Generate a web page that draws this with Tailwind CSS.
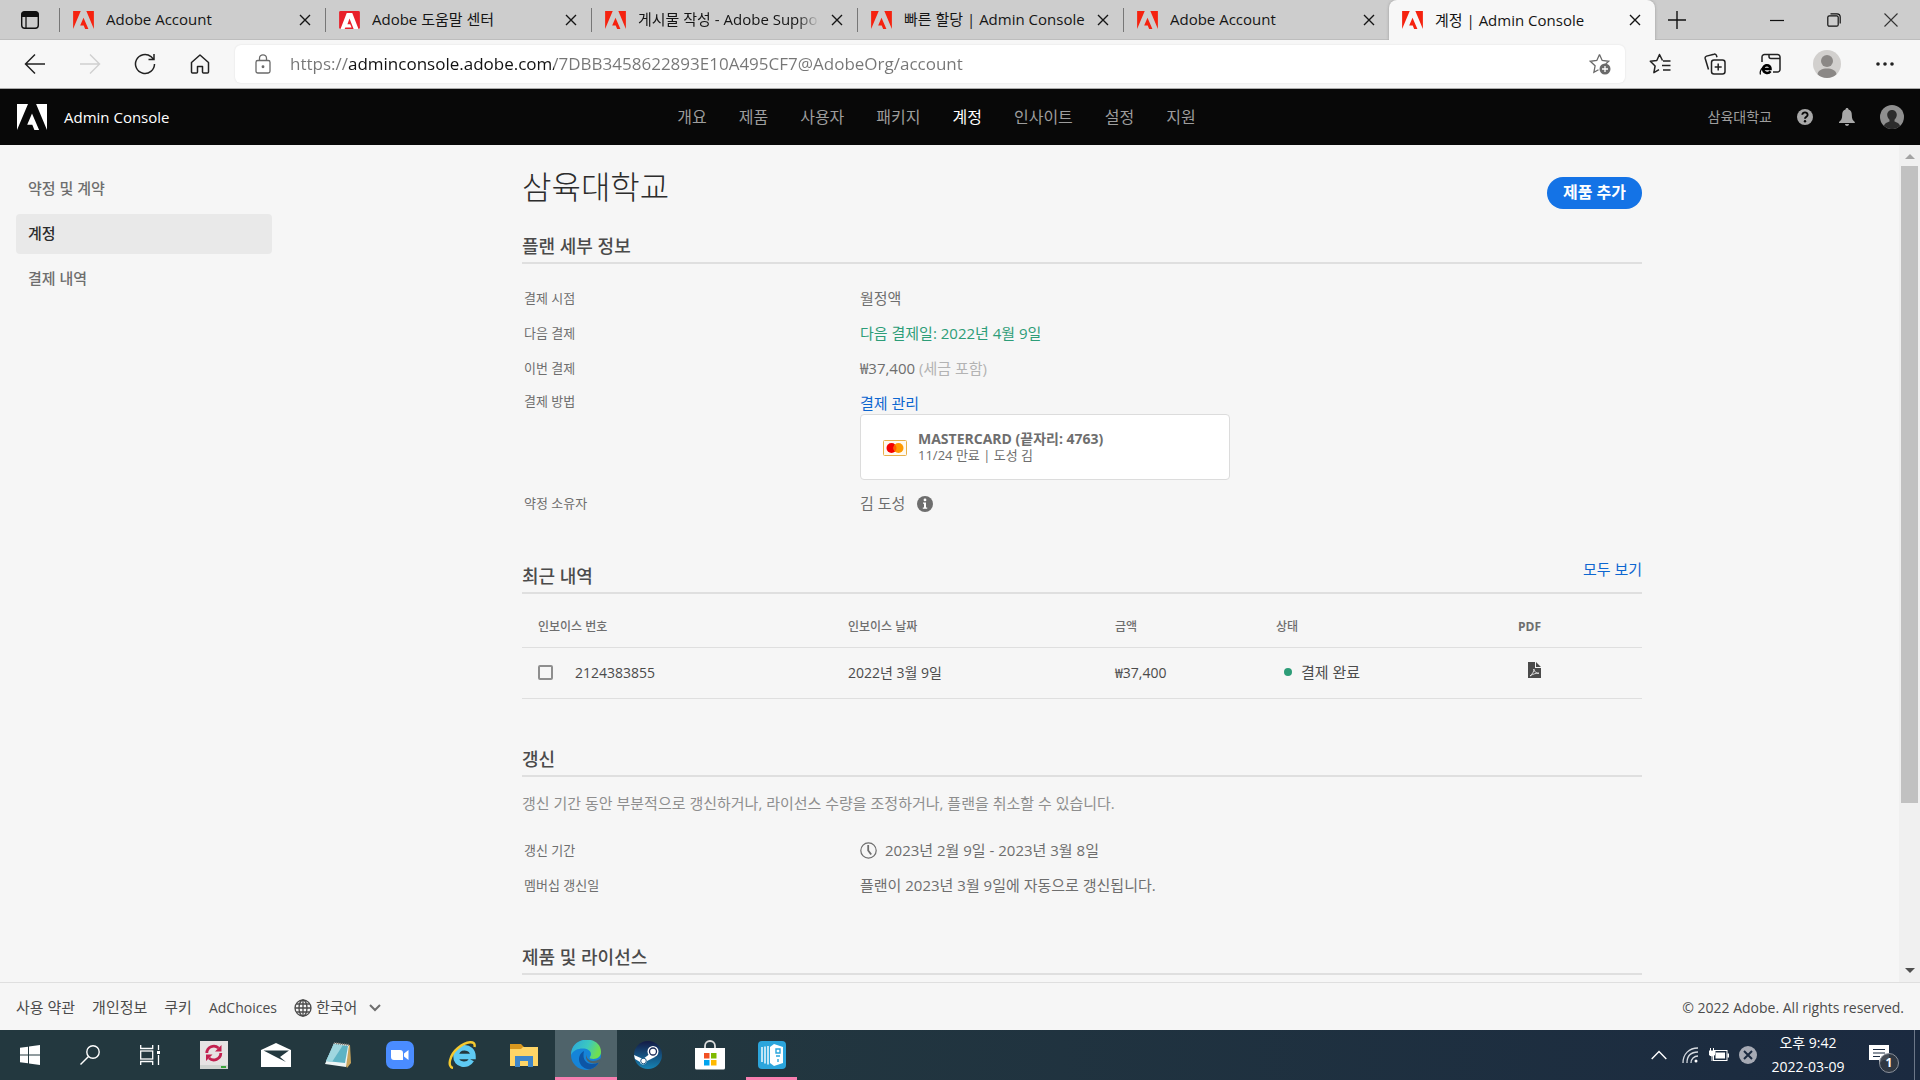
<!DOCTYPE html>
<html lang="ko">
<head>
    <meta charset="UTF-8">
    <meta name="viewport" content="width=device-width, initial-scale=1.0">
    <title>계정 | Admin Console</title>
    <script src="https://cdn.jsdelivr.net/npm/@tailwindcss/browser@4"></script>
</head>
<body class="h-screen flex flex-col overflow-hidden bg-[#f6f6f6] text-[#6e6e6e] text-[15px] font-['Open_Sans','Noto_Sans_CJK_KR',sans-serif]">
    <svg class="hidden">
        <symbol id="adobe" viewBox="0 0 30 26"><path d="M19.1 0H30v26zM11 0H0v26zM15 9.6 22.1 26h-4.7l-2.1-5.2h-5.1z"/></symbol>
        <symbol id="close" viewBox="0 0 12 12"><path d="m1 1 10 10M11 1 1 11" fill="none" stroke="currentColor" stroke-width="1.4"/></symbol>
    </svg>

    <!-- Tab strip -->
    <div class="h-10 shrink-0 flex bg-[#cdcdcd] text-[#151515] text-[15px] border-b border-[#bdbdbd]">
        <button aria-label="Tab actions" class="w-[59px] flex items-center justify-center">
            <svg class="w-5 h-5" viewBox="0 0 20 20"><rect x="1.7" y="1.7" width="16.6" height="16.6" rx="3" fill="none" stroke="#111" stroke-width="1.4"/><path d="M1.5 7V4.500a3 3 0 0 1 3-3h11a3 3 0 0 1 3 3V7z" fill="#111"/><path d="M6 7v11" stroke="#111" stroke-width="1.3"/></svg>
        </button>
        <div class="w-px h-6 my-2 bg-[#777]"></div>
        <div class="w-[265px] flex items-center pl-[13px] pr-3.5">
            <svg class="w-[21px] h-[18px] fill-[#f5220f]"><use href="#adobe"/></svg>
            <a href="#" class="flex-1 ml-3 whitespace-nowrap overflow-hidden">Adobe Account</a>
            <button aria-label="Close tab"><svg class="w-3 h-3"><use href="#close"/></svg></button>
        </div>
        <div class="w-px h-6 my-2 bg-[#777]"></div>
        <div class="w-[265px] flex items-center pl-[13px] pr-3.5">
            <svg class="w-[21px] h-[18px]" viewBox="0 0 30 26"><rect width="30" height="26" rx="2" fill="#e8202a"/><path d="M11 3h8l9 23h-7l-6-15-3 8h4l2 5H9l-1 2H2z" fill="#fff"/></svg>
            <a href="#" class="flex-1 ml-3 whitespace-nowrap overflow-hidden">Adobe 도움말 센터</a>
            <button aria-label="Close tab"><svg class="w-3 h-3"><use href="#close"/></svg></button>
        </div>
        <div class="w-px h-6 my-2 bg-[#777]"></div>
        <div class="w-[265px] flex items-center pl-[13px] pr-3.5">
            <svg class="w-[21px] h-[18px] shrink-0 fill-[#f5220f]"><use href="#adobe"/></svg>
            <a href="#" class="flex-1 ml-3 mr-3 whitespace-nowrap overflow-hidden [mask-image:linear-gradient(to_right,#000_88%,transparent)]">게시물 작성 - Adobe Support</a>
            <button aria-label="Close tab"><svg class="w-3 h-3"><use href="#close"/></svg></button>
        </div>
        <div class="w-px h-6 my-2 bg-[#777]"></div>
        <div class="w-[265px] flex items-center pl-[13px] pr-3.5">
            <svg class="w-[21px] h-[18px] fill-[#f5220f]"><use href="#adobe"/></svg>
            <a href="#" class="flex-1 ml-3 whitespace-nowrap overflow-hidden">빠른 할당 | Admin Console</a>
            <button aria-label="Close tab"><svg class="w-3 h-3"><use href="#close"/></svg></button>
        </div>
        <div class="w-px h-6 my-2 bg-[#777]"></div>
        <div class="w-[265px] flex items-center pl-[13px] pr-3.5">
            <svg class="w-[21px] h-[18px] fill-[#f5220f]"><use href="#adobe"/></svg>
            <a href="#" class="flex-1 ml-3 whitespace-nowrap overflow-hidden">Adobe Account</a>
            <button aria-label="Close tab"><svg class="w-3 h-3"><use href="#close"/></svg></button>
        </div>
        <div class="w-[266px] h-10 flex items-center pl-[13px] pr-3.5 bg-[#f7f7f7] rounded-t-lg shadow-[0_0_3px_#999] [clip-path:inset(-4px_-4px_0px_-4px)]">
            <svg class="w-[21px] h-[18px] fill-[#f5220f]"><use href="#adobe"/></svg>
            <a href="#" class="flex-1 ml-3 whitespace-nowrap overflow-hidden">계정 | Admin Console</a>
            <button aria-label="Close tab"><svg class="w-3 h-3"><use href="#close"/></svg></button>
        </div>
        <button aria-label="New tab" class="w-11 flex items-center justify-center">
            <svg class="w-[18px] h-[18px]" viewBox="0 0 18 18"><path d="M9 0v18M0 9h18" stroke="#111" stroke-width="1.4"/></svg>
        </button>
        <div class="ml-auto flex pr-px">
            <button aria-label="Minimize" class="w-[57px] flex items-center justify-center"><svg class="w-3.5 h-3.5" viewBox="0 0 14 14"><path d="M0 7.500h14" stroke="#111" stroke-width="1.2"/></svg></button>
            <button aria-label="Restore" class="w-[57px] flex items-center justify-center"><svg class="w-3.5 h-3.5" viewBox="0 0 14 14" fill="none" stroke="#111" stroke-width="1.200"><rect x=".8" y="2.800" width="10.400" height="10.400" rx="1.500"/><path d="M3.500.8H10A3.200 3.200 0 0 1 13.200 4v6.500"/></svg></button>
            <button aria-label="Close window" class="w-[57px] flex items-center justify-center"><svg class="w-3.5 h-3.5" viewBox="0 0 14 14"><path d="m.5.5 13 13m0-13-13 13" stroke="#333" stroke-width="1.100"/></svg></button>
        </div>
    </div>

    <!-- Address bar -->
    <div class="h-[49px] shrink-0 flex items-center bg-[#f7f7f7] border-b border-[#aaa]">
        <div class="w-[235px] pl-[7px] flex">
            <button aria-label="Back" class="w-[55px] flex justify-center"><svg class="w-[22px] h-[22px]" viewBox="0 0 22 22" fill="none" stroke="#222" stroke-width="1.500"><path d="M21 11H1.500M11 1.500 1.500 11l9.500 9.500"/></svg></button>
            <button aria-label="Forward" class="w-[55px] flex justify-center"><svg class="w-[22px] h-[22px]" viewBox="0 0 22 22" fill="none" stroke="#d0d0d0" stroke-width="1.500"><path d="M1 11h19.500M11 1.500l9.500 9.500-9.500 9.500"/></svg></button>
            <button aria-label="Refresh" class="w-[55px] flex justify-center"><svg class="w-[22px] h-[22px]" viewBox="0 0 22 22" fill="none" stroke="#222" stroke-width="1.500"><path d="M20.500 11A9.500 9.500 0 1 1 17 3.600l2.500 2.600M20 1v5.500h-5.500"/></svg></button>
            <button aria-label="Home" class="w-[55px] flex justify-center"><svg class="w-5 h-[22px]" viewBox="0 0 20 22" fill="none" stroke="#222" stroke-width="1.500" stroke-linejoin="round"><path d="M1.500 9.500 10 2l8.500 7.500V19a1 1 0 0 1-1 1h-4a1 1 0 0 1-1-1v-5.500h-5V19a1 1 0 0 1-1 1h-4a1 1 0 0 1-1-1z"/></svg></button>
        </div>
        <div class="flex-1 h-[38px] flex items-center gap-[19px] pl-5 pr-3.5 bg-white rounded-md shadow-[0_0_2px_#ddd]">
            <svg class="w-4 h-5 shrink-0" viewBox="0 0 16 20" fill="none" stroke="#6a6a6a" stroke-width="1.300"><rect x="1" y="6.500" width="14" height="12.500" rx="1.800"/><path d="M4.500 6.500V4.300a3.500 3.500 0 0 1 7 0v2.200"/><circle cx="8" cy="12.700" r=".8" fill="#6a6a6a"/></svg>
            <input aria-label="Address" type="text" value="https://adminconsole.adobe.com/7DBB3458622893E10A495CF7@AdobeOrg/account" class="flex-1 min-w-0 h-8 pb-0.5 outline-none text-[17px] bg-[linear-gradient(to_right,#767676_58px,#111111_58px,#111111_264px,#767676_264px)] bg-clip-text text-transparent">
            <button aria-label="Add to favorites"><svg class="w-[22px] h-[22px]" viewBox="0 0 22 22"><path d="m10.500 1.500 2.700 6 6.500.8-3 2.800M10.500 1.500l-2.700 6-6.500.8 4.800 4.500-1.200 6.500 4.600-2.500" fill="none" stroke="#6a6a6a" stroke-width="1.300"/><circle cx="16" cy="16" r="5.500" fill="#6a6a6a"/><path d="M16 13v6M13 16h6" stroke="#fff" stroke-width="1.300"/></svg></button>
        </div>
        <div class="w-[295px] pl-[7px] flex items-center">
            <button aria-label="Favorites" class="w-[55px] flex justify-center"><svg class="w-[22px] h-[22px]" viewBox="0 0 22 22" fill="none" stroke="#222" stroke-width="1.500" stroke-linejoin="round"><path d="M13.500 7.500 10.500 1.500l-2.700 6-6.500.8 4.800 4.700-1.200 6.700 5.100-3M14 8h7.500M13 12.500h8.500M14 17h7.500"/></svg></button>
            <button aria-label="Collections" class="w-[55px] flex justify-center"><svg class="w-[22px] h-[22px]" viewBox="0 0 22 22" fill="none" stroke="#222" stroke-width="1.500"><rect x="7.500" y="7" width="13.500" height="14" rx="2.500"/><path d="M14.200 10.500v7M10.700 14h7M4.500 16.500 1.200 5.500a2 2 0 0 1 1.300-2.400L10 1.200a2 2 0 0 1 2.500 1.400l.5 1.700"/></svg></button>
            <button aria-label="Internet Explorer mode" class="w-[55px] flex justify-center"><svg class="w-[22px] h-[22px]" viewBox="0 0 22 22" fill="none" stroke="#222" stroke-width="1.500"><path d="M3 9V4a2.500 2.500 0 0 1 2.500-2.500h13A2.500 2.500 0 0 1 21 4v12.500a2.500 2.500 0 0 1-2.500 2.500H14M10 1.500v2A2 2 0 0 0 12 5.500h9"/><path d="M11.500 18.200c-2.200 3-7.300 2-7.300-2.200 0-5 7.600-5 7.300 0H4.200" stroke="#000" stroke-width="2.600"/><path d="M1.500 21.500c-1.200-3 1.500-8 6.500-10" stroke="#000" stroke-width="1.200"/></svg></button>
            <button aria-label="Profile" class="w-[60px] flex justify-center"><svg class="w-7 h-7" viewBox="0 0 28 28"><circle cx="14" cy="14" r="14" fill="#d2d0ce"/><circle cx="14" cy="11" r="6" fill="#8b8886"/><path d="M4.500 24.200C5 16.500 23 16.500 23.500 24.200a14 14 0 0 1-19 0z" fill="#8b8886"/></svg></button>
            <button aria-label="Settings and more" class="w-[55px] flex justify-center"><svg class="w-[18px] h-1" viewBox="0 0 18 4" fill="#222"><circle cx="2" cy="2" r="1.800"/><circle cx="9" cy="2" r="1.800"/><circle cx="16" cy="2" r="1.800"/></svg></button>
        </div>
    </div>

    <!-- Admin Console header -->
    <header class="h-14 shrink-0 grid grid-cols-[1fr_auto_1fr] items-center pl-[17px] pr-4 bg-[#080808] text-[#9d9d9d]">
        <a href="#" class="flex items-center gap-[17px] text-white text-[15px]">
            <svg class="w-[30px] h-[26px] fill-white"><use href="#adobe"/></svg>
            Admin Console
        </a>
        <nav class="flex gap-8 pr-12 text-base">
            <a href="#">개요</a>
            <a href="#">제품</a>
            <a href="#">사용자</a>
            <a href="#">패키지</a>
            <a href="#" class="text-white">계정</a>
            <a href="#">인사이트</a>
            <a href="#">설정</a>
            <a href="#">지원</a>
        </nav>
        <div class="flex items-center justify-end">
            <span class="text-sm mr-[25px]">삼육대학교</span>
            <button aria-label="Help" class="mr-[26px]"><svg class="w-4 h-4" viewBox="0 0 16 16"><circle cx="8" cy="8" r="8" fill="#a8a8a8"/><path d="M5.300 5.800C5.300 2.500 10.700 2.500 10.600 5.900 10.600 7.600 8 7.800 8 9.700" fill="none" stroke="#080808" stroke-width="1.900"/><circle cx="8" cy="12.300" r="1.200" fill="#080808"/></svg></button>
            <button aria-label="Notifications" class="mr-[25px]"><svg class="w-4 h-[18px]" viewBox="0 0 16 18" fill="#a8a8a8"><path d="M8 0c1 0 1.500.7 1.500 1.600C12 2.300 12.800 4.500 12.800 7c0 4 1 5.500 3 7v1H0v-1c2-1.500 3.200-3 3.200-7 0-2.500.8-4.700 3.300-5.400C6.500.7 7 0 8 0zM6 16h4c0 2.600-4 2.600-4 0z"/></svg></button>
            <button aria-label="Account"><svg class="w-6 h-6" viewBox="0 0 24 24"><circle cx="12" cy="12" r="12" fill="#8f8f8f"/><path d="M4 21c.5-3 3.500-3.500 5.500-4.500v-1.800C5.500 11 7 5 12 5s6.500 6 2.500 9.700v1.800c2 1 5 1.500 5.500 4.500a12 12 0 0 1-16 0z" fill="#2c2c2c"/></svg></button>
        </div>
    </header>

    <!-- Page -->
    <div class="flex-1 min-h-0 flex">
        <aside class="w-[272px] shrink-0 pl-4 pt-6">
            <nav class="flex flex-col gap-[5px] font-medium">
                <a href="#" class="h-10 px-3 pb-0.5 flex items-center rounded">약정 및 계약</a>
                <a href="#" class="h-10 px-3 pb-0.5 flex items-center rounded bg-[#e9e9e9] text-[#2c2c2c]">계정</a>
                <a href="#" class="h-10 px-3 pb-0.5 flex items-center rounded">결제 내역</a>
            </nav>
        </aside>

        <main class="flex-1 min-w-0 overflow-hidden pl-[250px] pr-[257px]">
            <div class="flex justify-between items-start pt-[22px] h-[87px]">
                <h1 class="text-[32px] leading-10 font-light text-[#2c2c2c]">삼육대학교</h1>
                <button class="mt-2.5 h-8 px-4 pb-0.5 rounded-full bg-[#1473e6] text-white text-base font-bold leading-none">제품 추가</button>
            </div>

            <section>
                <h2 class="h-8 leading-7 text-lg font-medium text-[#4b4b4b] border-b-2 border-[#dfdfdf]">플랜 세부 정보</h2>
                <dl class="pt-[17px] pl-0.5 grid grid-cols-[336px_1fr] auto-rows-[35px] leading-[35px]">
                    <dt class="text-[13px]">결제 시점</dt>
                    <dd>월정액</dd>
                    <dt class="text-[13px]">다음 결제</dt>
                    <dd class="text-[#2d9d78]">다음 결제일: 2022년 4월 9일</dd>
                    <dt class="text-[13px]">이번 결제</dt>
                    <dd>₩37,400 <span class="text-[#b3b3b3]">(세금 포함)</span></dd>
                </dl>
                <dl class="pl-0.5 grid grid-cols-[336px_1fr]">
                    <dt class="text-[13px] leading-[30px]">결제 방법</dt>
                    <dd>
                        <a href="#" class="block h-7 leading-[35px] text-[#0d66d0]">결제 관리</a>
                        <div class="w-[370px] h-[66px] flex items-center gap-[11px] pl-[22px] bg-white border border-[#dcdcdc] rounded">
                            <svg class="w-6 h-4 mt-0.5" viewBox="0 0 24 16"><rect x=".5" y=".5" width="23" height="15" rx="1" fill="#fffaf0" stroke="#e8b04a"/><circle cx="8.500" cy="8" r="5" fill="#f40000"/><circle cx="15.500" cy="8" r="5" fill="#ff9a00"/><path d="M12 4.400a5 5 0 0 1 0 7.200 5 5 0 0 1 0-7.200z" fill="#ff5f00"/></svg>
                            <div>
                                <p class="text-sm leading-4 font-bold">MASTERCARD (끝자리: 4763)</p>
                                <p class="text-[13px] leading-4">11/24 만료 | 도성 김</p>
                            </div>
                        </div>
                    </dd>
                    <dt class="mt-1.5 text-[13px] leading-[35px]">약정 소유자</dt>
                    <dd class="mt-1.5 flex items-center gap-3 leading-[35px]">
                        김 도성
                        <svg class="w-4 h-4" viewBox="0 0 16 16"><circle cx="8" cy="8" r="8" fill="#6e6e6e"/><circle cx="8" cy="3.900" r="1.400" fill="#fff"/><path d="M6 6.500h3v5h1.200v1.300H5.800v-1.300H7V7.800H6z" fill="#fff"/></svg>
                    </dd>
                </dl>
            </section>

            <section class="mt-[41px]">
                <div class="h-8 flex justify-between border-b-2 border-[#dfdfdf]">
                    <h2 class="leading-7 text-lg font-medium text-[#4b4b4b]">최근 내역</h2>
                    <a href="#" class="leading-3.5 text-[#0d66d0]">모두 보기</a>
                </div>
                <table class="w-full mt-[13px] table-fixed text-left">
                    <thead>
                        <tr class="h-10 border-b border-[#dfdfdf] text-xs">
                            <th class="w-[310px] pl-4 font-medium">인보이스 번호</th>
                            <th class="w-[267px] pl-4 font-medium">인보이스 날짜</th>
                            <th class="w-[161px] pl-4 font-medium">금액</th>
                            <th class="w-[242px] pl-4 font-medium">상태</th>
                            <th class="pl-4 font-bold">PDF</th>
                        </tr>
                    </thead>
                    <tbody>
                        <tr class="h-[51px] border-b border-[#dfdfdf] text-sm text-[#4b4b4b]">
                            <td class="pl-4">
                                <label class="flex items-center gap-[22px]">
                                    <input type="checkbox" class="appearance-none w-[15px] h-[15px] border-2 border-[#8e8e8e] rounded-xs">
                                    2124383855
                                </label>
                            </td>
                            <td class="pl-4">2022년 3월 9일</td>
                            <td class="pl-4">₩37,400</td>
                            <td class="pl-6"><span class="flex items-center gap-[9px] text-[15px]"><span class="w-2 h-2 rounded-full bg-[#2d9d78]"></span>결제 완료</span></td>
                            <td class="pl-[26px]"><a href="#" aria-label="PDF"><svg class="w-[13px] h-4 mb-1.5" viewBox="0 0 13 16"><path d="M0 0h7v6h6v10H0zM8 0l5 5H8z" fill="#4b4b4b"/><path d="M2 14c2-1.500 4.500-5 3.800-7 .5 3 2.700 4.500 5.200 4.200-3-.2-6 .8-9 2.800z" fill="none" stroke="#f6f6f6" stroke-width=".8"/></svg></a></td>
                        </tr>
                    </tbody>
                </table>
            </section>

            <section class="mt-[46px]">
                <h2 class="h-8 leading-7 text-lg font-medium text-[#4b4b4b] border-b-2 border-[#dfdfdf]">갱신</h2>
                <p class="mt-3.5 leading-6 text-[#8e8e8e]">갱신 기간 동안 부분적으로 갱신하거나, 라이선스 수량을 조정하거나, 플랜을 취소할 수 있습니다.</p>
                <dl class="mt-[18px] pl-0.5 grid grid-cols-[336px_1fr] auto-rows-[35px] leading-[35px]">
                    <dt class="text-[13px]">갱신 기간</dt>
                    <dd class="flex items-center gap-2">
                        <svg class="w-[17px] h-[17px]" viewBox="0 0 17 17" fill="none" stroke="#6e6e6e"><circle cx="8.500" cy="8.500" r="7.700" stroke-width="1.200"/><path d="M8.200 3v5.500l3 4" stroke-width="1.800"/></svg>
                        2023년 2월 9일 - 2023년 3월 8일
                    </dd>
                    <dt class="text-[13px]">멤버십 갱신일</dt>
                    <dd>플랜이 2023년 3월 9일에 자동으로 갱신됩니다.</dd>
                </dl>
            </section>

            <section class="mt-10">
                <h2 class="h-8 leading-7 text-lg font-medium text-[#4b4b4b] border-b-2 border-[#dfdfdf]">제품 및 라이선스</h2>
            </section>
        </main>

        <!-- Scrollbar -->
        <div class="w-[21px] flex flex-col items-center bg-[#f0f0f0]">
            <svg class="w-2.5 h-[21px] shrink-0" viewBox="0 0 10 21"><path d="M0 14h10L5 9z" fill="#a3a3a3"/></svg>
            <div class="w-[17px] h-[637px] bg-[#c1c1c1]"></div>
            <svg class="w-2.5 h-6 mt-auto shrink-0" viewBox="0 0 10 24"><path d="M0 10h10l-5 5z" fill="#505050"/></svg>
        </div>
    </div>

    <footer class="h-12 shrink-0 flex items-center px-4 pt-0.5 border-t border-[#dfdfdf] text-[#4b4b4b]">
        <nav class="flex items-center gap-[17px]">
            <a href="#">사용 약관</a>
            <a href="#">개인정보</a>
            <a href="#">쿠키</a>
            <a href="#" class="text-sm">AdChoices</a>
            <button class="flex items-center gap-1">
                <svg class="w-[18px] h-[18px]" viewBox="0 0 18 18" fill="none" stroke="#4b4b4b" stroke-width="1.300"><circle cx="9" cy="9" r="8"/><ellipse cx="9" cy="9" rx="4" ry="8"/><path d="M9 1v16M1 9h16M2.200 5h13.600M2.200 13h13.600"/></svg>
                한국어
                <svg class="w-3 h-2 ml-2" viewBox="0 0 12 8"><path d="m1 1 5 5 5-5" fill="none" stroke="#6e6e6e" stroke-width="2"/></svg>
            </button>
        </nav>
        <p class="ml-auto text-sm">© 2022 Adobe. All rights reserved.</p>
    </footer>

    <!-- Taskbar -->
    <div class="h-[50px] shrink-0 flex items-center bg-linear-to-r from-[#23383f] to-[#1b2a40] from-30% text-white">
        <button aria-label="Start" class="w-[60px] flex justify-center"><svg class="w-5 h-5" viewBox="0 0 20 20" fill="#fff"><path d="M0 2.800 8 1.700v7.800H0zM9 1.500 20 0v9.500H9zM0 10.500h8v7.800l-8-1.100zM9 10.500h11V20L9 18.500z"/></svg></button>
        <button aria-label="Search" class="w-[60px] flex justify-center"><svg class="w-5 h-5" viewBox="0 0 20 20" fill="none" stroke="#fff" stroke-width="1.400"><circle cx="13" cy="7" r="6.200"/><path d="M8.500 11.500.5 19.500"/></svg></button>
        <button aria-label="Task view" class="w-[60px] flex justify-center"><svg class="w-5 h-5" viewBox="0 0 20 20" fill="none" stroke="#fff" stroke-width="1.300"><path d="M.7 0v3.500h12V0M.7 20v-3.500h12V20M18.500 0v5M18.500 10v10"/><rect x=".7" y="6" width="12" height="8"/><path d="M17 6h3v3h-3z" fill="#fff" stroke="none"/></svg></button>
        <button aria-label="Sync" class="w-[65px] pl-[3px] flex justify-center"><svg class="w-7 h-7" viewBox="0 0 28 28"><path d="M0 0h28v28H0z" fill="#e6e3e3"/><path d="M0 24h28v4H0z" fill="#cfd3d0"/><path d="M21 25h5v2h-5z" fill="#3aa43a"/><path d="M6.800 12A7 7 0 0 1 18.500 7M20.800 12A7 7 0 0 1 9 17" fill="none" stroke="#c2204f" stroke-width="2.800"/><path d="M21.500 4v6.500H15zM6 20v-6.500h6.500z" fill="#c2204f"/></svg></button>
        <button aria-label="Mail" class="w-[62px] flex justify-center"><svg class="w-[30px] h-6" viewBox="0 0 30 24"><path d="M0 7 15 0l15 7v17H0z" fill="#fff"/><path d="M2.500 7.500h25.500L19 14l6 5-9-4.500z" fill="#23383f"/></svg></button>
        <button aria-label="Notepad" class="w-[62px] flex justify-center"><svg class="w-7 h-7" viewBox="0 0 28 28"><path d="m11 2 15 2 1 18-4 5z" fill="#c9a45c"/><path d="m10 2 15 2-3 22-21-3z" fill="#eef4f4"/><path d="m10 3 14 2-3 17-19-2z" fill="#5eb3c4"/><path d="m10 3 9 1-11 17-6-1z" fill="#9fd6df"/><path d="m10 2 15 2" stroke="#777" stroke-width="2" stroke-dasharray="1 1"/></svg></button>
        <button aria-label="Zoom" class="w-[62px] flex justify-center"><svg class="w-7 h-7" viewBox="0 0 28 28"><rect width="28" height="28" rx="7" fill="#4a8cff"/><path d="M5 9h9a3 3 0 0 1 3 3v7H8a3 3 0 0 1-3-3zM18 12.500l4.500-3.500v10L18 15.500z" fill="#fff"/></svg></button>
        <button aria-label="Internet Explorer" class="w-[62px] flex justify-center"><svg class="w-7 h-7" viewBox="0 0 28 28" fill="none"><path d="M23.500 19c-4 7-16 5-15.500-4C8.500 4 25 4 25 15.500H8.500" stroke="#5fcaf3" stroke-width="5.500"/><path d="M5 27C-1 26 1.500 14 10 7S28-1 26.500 6" stroke="#f5c92f" stroke-width="2.400"/></svg></button>
        <button aria-label="File Explorer" class="w-[62px] flex justify-center"><svg class="w-7 h-6" viewBox="0 0 28 24"><path d="M0 1h11l3 3h14v19H0z" fill="#d9971e"/><path d="M0 6h11l2-2h15v19H0z" fill="#ffd566"/><path d="M5 24V13h18v11h-5v-6h-8v6z" fill="#3f86c9"/></svg></button>
        <button aria-label="Microsoft Edge" class="w-[62px] h-[50px] flex items-center justify-center bg-[#4f636a] border-b-3 border-[#f77fb0]"><svg class="w-[30px] h-[30px] mt-0.5" viewBox="0 0 30 30"><defs><linearGradient id="eg" x2="1" y2=".3"><stop offset="0" stop-color="#2aa5dd"/><stop offset=".6" stop-color="#3cc8c0"/><stop offset="1" stop-color="#6fdf50"/></linearGradient></defs><circle cx="15" cy="15" r="15" fill="#1584d8"/><path d="M0 15C0-5 30-5 30 12c0 6-6 8-10.500 6.500-2-.8.500-2 .5-4.500C20 7 4 6 0 15z" fill="url(#eg)"/><path d="M13 11c-9 5-5 18 6 18.300 4-1 7-3.300 9-7-8 4-18 1-15-11.300z" fill="#0d55a5"/><path d="M16 13c-2 3 1 8 6 8s8-3 8-3l-1 4c-8 4-17-1-13-9z" fill="#4f636a"/></svg></button>
        <button aria-label="Steam" class="w-[62px] flex justify-center"><svg class="w-7 h-7" viewBox="0 0 28 28"><defs><linearGradient id="sg" x2="0" y2="1"><stop offset="0" stop-color="#141b45"/><stop offset="1" stop-color="#1684b5"/></linearGradient></defs><circle cx="14" cy="14" r="14" fill="url(#sg)"/><path d="m0 14 9 4 8-6 4 4-8 4c-1 5-7 4-7 1l-5-3z" fill="#fff"/><circle cx="19" cy="10.500" r="5.500" fill="#fff"/><circle cx="19" cy="10.500" r="3.500" fill="#fff" stroke="#1b2b57" stroke-width="1.300"/><circle cx="9.500" cy="20" r="2.800" fill="none" stroke="#1b5b87"/></svg></button>
        <button aria-label="Microsoft Store" class="w-[62px] flex justify-center"><svg class="w-[30px] h-[30px]" viewBox="0 0 30 30"><path d="M10 10V6a5 5 0 0 1 10 0v4" fill="none" stroke="#ddd" stroke-width="1.800"/><path d="M0 8h30v20a1.500 1.500 0 0 1-1.500 1.500h-27A1.500 1.500 0 0 1 0 28z" fill="#fff"/><path d="M9 13h5.500v5.500H9z" fill="#f25022"/><path d="M16 13h5.500v5.500H16z" fill="#7fba00"/><path d="M9 20h5.500v5.500H9z" fill="#00a4ef"/><path d="M16 20h5.500v5.500H16z" fill="#ffb900"/></svg></button>
        <button aria-label="Book viewer" class="ml-[5px] w-[51px] h-[50px] flex items-center justify-center border-b-3 border-[#f77fb0]"><svg class="w-7 h-7 mt-0.5" viewBox="0 0 28 28"><rect width="28" height="28" rx="4" fill="#2ba5dc"/><path d="m12 6 4-3 9 3v16l-9 3-4-3z" fill="#fff"/><path d="M4 6v15M7 5.500v17M10 5v18.500" stroke="#fff" stroke-width="1.400"/><path d="M18 8h4v4h-4zM18 15h4M20 18v3" fill="none" stroke="#2ba5dc" stroke-width="1.400"/></svg></button>

        <div class="ml-auto flex items-center">
            <button aria-label="Hidden icons"><svg class="w-4 h-[10px]" viewBox="0 0 16 10"><path d="m.7 9 7.300-7.500L15.300 9" fill="none" stroke="#fff" stroke-width="1.400"/></svg></button>
            <svg class="w-4 h-4 ml-[15px]" viewBox="0 0 16 16" fill="none" stroke="#d5dae0" stroke-width="1.300"><path d="M1 16C1 7 7 1 16 1M5 16C5 9 9 5 16 5M9 16c0-4 3-7 7-7"/><circle cx="14" cy="14" r="1.500" fill="#fff" stroke="none"/></svg>
            <svg class="w-5 h-3.5 ml-[11px]" viewBox="0 0 20 14" fill="none" stroke="#fff"><rect x="4.500" y="2.500" width="13.500" height="10"/><path d="M6.500 4.500h9.500v6H6.500zM18.500 5.500H20v4h-1.500z" fill="#fff" stroke="none"/><path d="M1.500 0v3M4.500 0v3M0 3h6v2a3 3 0 0 1-6 0zM3 8v5" fill="#fff"/></svg>
            <svg class="w-[18px] h-[18px] ml-2.5" viewBox="0 0 18 18"><circle cx="9" cy="9" r="9" fill="#a6aab4"/><path d="m5 5 8 8m0-8-8 8" stroke="#1b2a40" stroke-width="2"/></svg>
            <div class="ml-3 w-[78px] text-center text-sm leading-6">
                <p>오후 9:42</p>
                <p>2022-03-09</p>
            </div>
            <button aria-label="Notifications" class="relative ml-[22px] mr-[25px]">
                <svg class="w-5 h-5" viewBox="0 0 20 20"><path d="M0 0h20v15h-6l-4 4v-4H0z" fill="#fff"/><path d="M4 4.500h12M4 8h12M4 11.500h7" stroke="#1b2a40" stroke-width="1.200"/></svg>
                <span class="absolute left-2.5 top-2 w-5 h-5 rounded-full bg-[#333a44]/90 border border-[#8b919b] text-xs leading-[18px] font-bold">1</span>
            </button>
            <span class="w-px h-[50px] mr-[5px] bg-[#6c7788]"></span>
        </div>
    </div>
</body>
</html>
